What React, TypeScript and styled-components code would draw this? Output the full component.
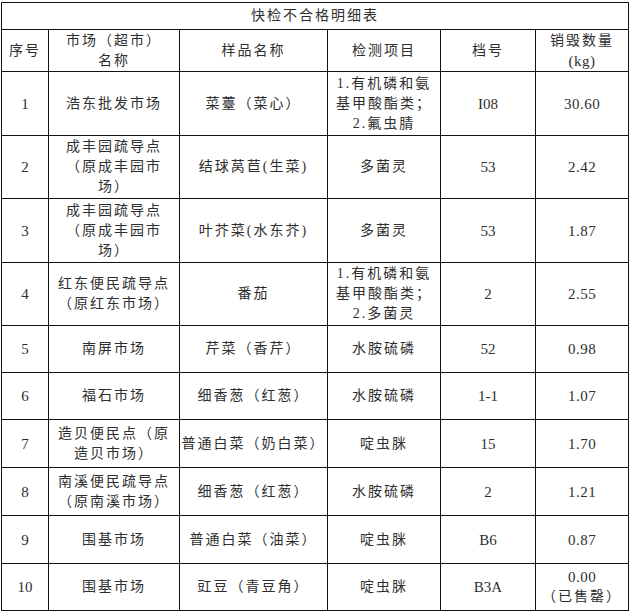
import styled, { createGlobalStyle } from 'styled-components'

// ---| Global |-------------------------------------------

const Global = createGlobalStyle`
    html,body{
        margin:0;
        padding:0;
        background:#fff;
        overflow:hidden;
    }
`

// ---| Table |--------------------------------------------

const COLS = [46, 130, 147, 112, 94, 92]

const Sheet = styled.div<{ $rows: string }>`
    margin:2px 0 0 1px;
    width:max-content;
    display:grid;
    grid-template-columns:${COLS.map(c => c + 'px').join(' ')};
    grid-template-rows:${p => p.$rows};
    gap:1px;
    padding:1px;
    background:#111;
    font-family:'Liberation Serif','Noto Sans CJK SC',serif;
    color:#2e2e2e;
`

const Cell = styled.div<{ $num?: boolean }>`
    background:#fff;
    display:flex;
    flex-direction:column;
    align-items:center;
    justify-content:center;
    text-align:center;
    white-space:nowrap;
    font-size:${p => (p.$num ? '15px' : '14px')};
    letter-spacing:${p => (p.$num ? '0' : '2px')};
    line-height:20px;
`

const TitleCell = styled(Cell)`
    grid-column:1 / -1;
`

// a line of a cell; numbers keep their natural spacing
const Line = styled.span<{ $num?: boolean }>`
    display:block;
    ${p => p.$num && 'letter-spacing:0.5px;font-size:15px;'}
`

type Row = {
    no: string
    market: string[]
    sample: string[]
    item: string[]
    code: string
    qty: string[]
    h: number
}

const ROWS: Row[] = [
    { no: '1', market: ['浩东批发市场'], sample: ['菜薹（菜心）'], item: ['1.有机磷和氨', '基甲酸酯类；', '2.氟虫腈'], code: 'I08', qty: ['30.60'], h: 63 },
    { no: '2', market: ['成丰园疏导点', '（原成丰园市', '场）'], sample: ['结球莴苣(生菜)'], item: ['多菌灵'], code: '53', qty: ['2.42'], h: 62 },
    { no: '3', market: ['成丰园疏导点', '（原成丰园市', '场）'], sample: ['叶芥菜(水东芥)'], item: ['多菌灵'], code: '53', qty: ['1.87'], h: 63 },
    { no: '4', market: ['红东便民疏导点', '（原红东市场）'], sample: ['番茄'], item: ['1.有机磷和氨', '基甲酸酯类；', '2.多菌灵'], code: '2', qty: ['2.55'], h: 62 },
    { no: '5', market: ['南屏市场'], sample: ['芹菜（香芹）'], item: ['水胺硫磷'], code: '52', qty: ['0.98'], h: 46 },
    { no: '6', market: ['福石市场'], sample: ['细香葱（红葱）'], item: ['水胺硫磷'], code: '1-1', qty: ['1.07'], h: 46 },
    { no: '7', market: ['造贝便民点（原', '造贝市场）'], sample: ['普通白菜（奶白菜）'], item: ['啶虫脒'], code: '15', qty: ['1.70'], h: 47 },
    { no: '8', market: ['南溪便民疏导点', '（原南溪市场）'], sample: ['细香葱（红葱）'], item: ['水胺硫磷'], code: '2', qty: ['1.21'], h: 47 },
    { no: '9', market: ['围基市场'], sample: ['普通白菜（油菜）'], item: ['啶虫脒'], code: 'B6', qty: ['0.87'], h: 47 },
    { no: '10', market: ['围基市场'], sample: ['豇豆（青豆角）'], item: ['啶虫脒'], code: 'B3A', qty: ['0.00', '（已售罄）'], h: 46 },
]

const isNum = (t: string) => /^[\d.()a-z]+$/.test(t)

const lines = (items: string[]) =>
    items.map((t, i) => (
        <Line key={i} $num={isNum(t)}>
            {t}
        </Line>
    ))

export default function App() {
    const rows = ['26px', '41px', ...ROWS.map(r => r.h + 'px')].join(' ')
    return (
        <>
            <Global />
            <Sheet $rows={rows}>
                <TitleCell>快检不合格明细表</TitleCell>

                <Cell>序号</Cell>
                <Cell>{lines(['市场（超市）', '名称'])}</Cell>
                <Cell>样品名称</Cell>
                <Cell>检测项目</Cell>
                <Cell>档号</Cell>
                <Cell>{lines(['销毁数量', '(kg)'])}</Cell>

                {ROWS.map(r => (
                    <Row key={r.no} row={r} />
                ))}
            </Sheet>
        </>
    )
}

function Row({ row }: { row: Row }) {
    return (
        <>
            <Cell $num>{row.no}</Cell>
            <Cell>{lines(row.market)}</Cell>
            <Cell>{lines(row.sample)}</Cell>
            <Cell>{lines(row.item)}</Cell>
            <Cell $num>{row.code}</Cell>
            <Cell $num={row.qty.length === 1}>{lines(row.qty)}</Cell>
        </>
    )
}
